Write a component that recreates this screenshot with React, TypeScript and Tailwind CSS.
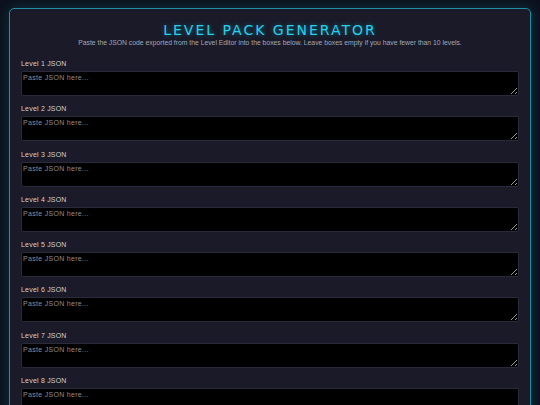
const levels = Array.from({ length: 10 }, (_, i) => i + 1);

export default function App() {
  return (
    <div className="min-h-[405px] w-[540px] overflow-hidden bg-[#0c111c] px-[9px] pt-[8px] pb-6">
      <div className="rounded-[5px] border border-[#1f8fa3] bg-[#1a1a28] px-[11px] pt-[13px] pb-4 shadow-[0_0_14px_rgba(34,211,238,0.18)]">
        {/* Header */}
        <div className="text-center">
          <h1 className="text-[14px] leading-[16px] font-medium tracking-[2px] text-[#22d3ee] [font-family:'DejaVu_Sans',sans-serif] [text-shadow:0_0_5px_rgba(34,211,238,0.45)]">
            LEVEL PACK GENERATOR
          </h1>
          <p className="text-[6.8px] leading-[9px] text-[#a3a7b4] [font-family:'Liberation_Sans',Arial,sans-serif]">
            Paste the JSON code exported from the Level Editor into the boxes below. Leave boxes empty if you have fewer than 10 levels.
          </p>
        </div>

        {/* Level inputs */}
        <div className="mt-[13px]">
          {levels.map((n) => (
            <div key={n} className="mb-[9.3px]">
              <label className="mb-[3px] block text-[7px] leading-[8px] font-normal tracking-[0.2px] text-[#cfd0d6] [font-family:'Liberation_Sans',Arial,sans-serif]">
                Level {n} JSON
              </label>
              <textarea
                placeholder="Paste JSON here..."
                className="block h-[25px] w-full resize-y rounded-[2px] border border-[#2a2b3a] bg-black px-[1px] py-[1px] text-[7px] leading-[9px] tracking-[0.3px] text-[#d4d6de] placeholder:text-[#8e8e92] [font-family:'Liberation_Sans',Arial,sans-serif] outline-none"
              />
            </div>
          ))}
        </div>
      </div>
    </div>
  );
}
